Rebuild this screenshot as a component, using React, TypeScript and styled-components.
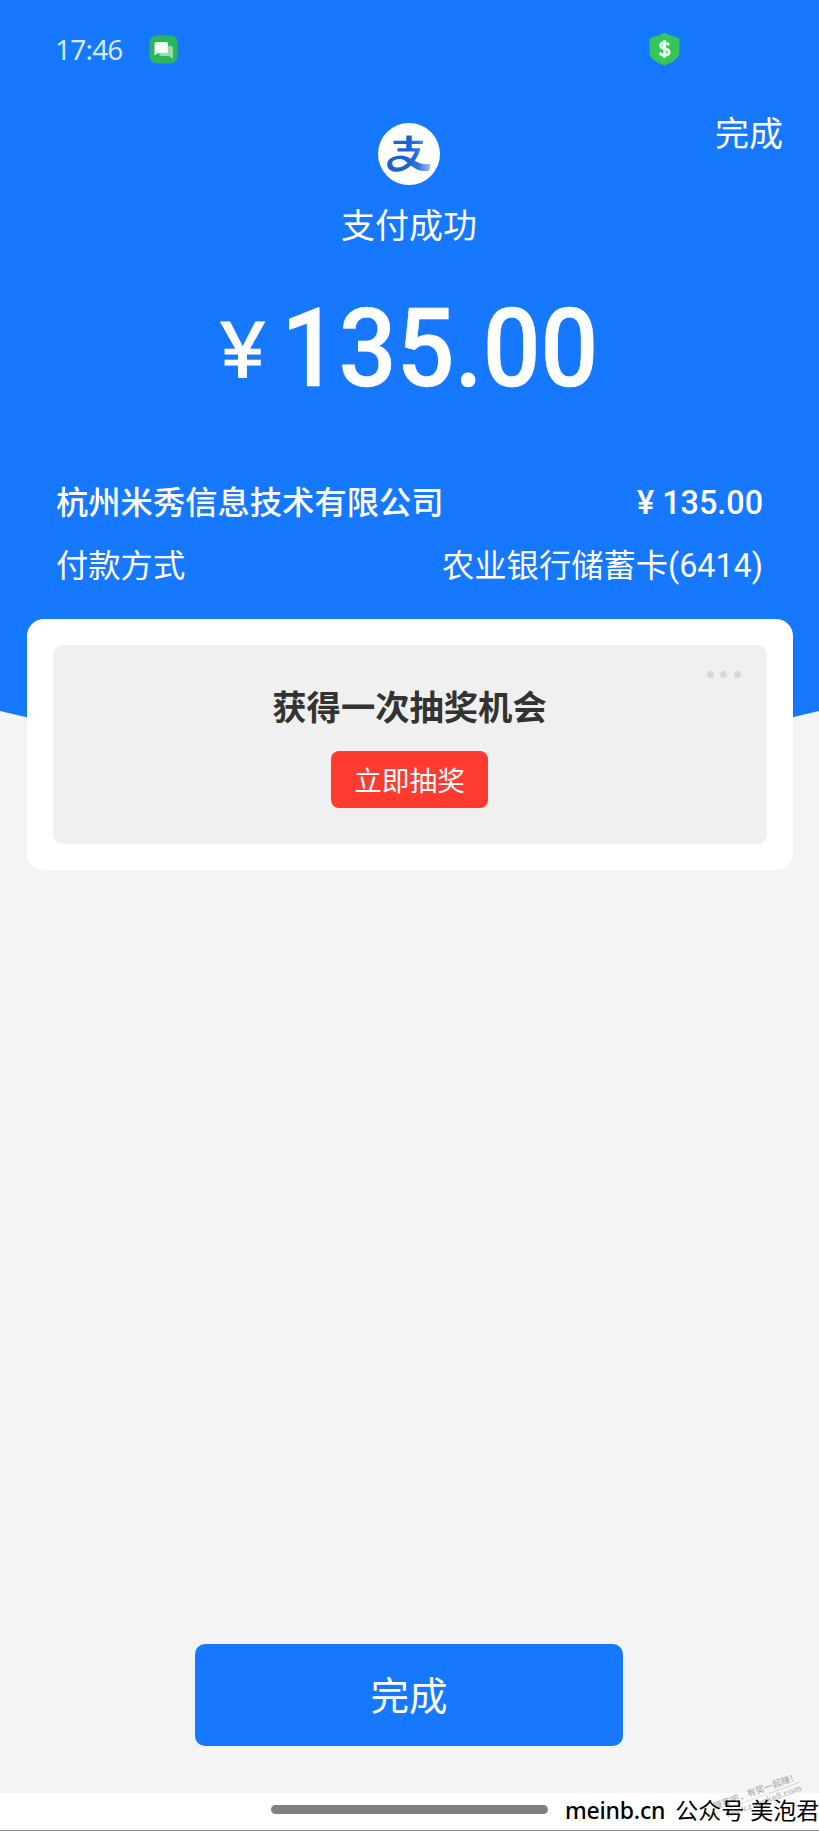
import React from "react";
import styled, { createGlobalStyle } from "styled-components";

const BLUE = "#1677ff";
const CJK = '"Noto Sans CJK SC", sans-serif';

const GlobalStyle = createGlobalStyle`
  * { box-sizing: border-box; }
  body { margin: 0; background: #f4f4f4; }
`;

const Page = styled.div`
  width: 819px;
  height: 1831px;
  display: flex;
  flex-direction: column;
  overflow: hidden;
  background: #f4f4f4;
  color: #fff;
  font-family: Roboto, ${CJK};
`;

const Hero = styled.header`
  flex: none;
  height: 761px;
  display: flex;
  flex-direction: column;
  background: ${BLUE};
  clip-path: path("M0 0H819V711Q409.5 811 0 711Z");
`;

const StatusBar = styled.div`
  height: 98px;
  padding: 0 139px 0 55px;
  display: flex;
  align-items: center;
`;

const Clock = styled.span`
  width: 94px;
  font: 400 28px/34px "Noto Sans", sans-serif;
  letter-spacing: -0.8px;
  color: #d3e9ff;
`;

const Shield = styled.svg`
  margin-left: auto;
`;

const NavBar = styled.div`
  height: 110px;
  padding-right: 1px;
  display: grid;
  grid-template-columns: 1fr 62px 1fr;
  align-items: start;
`;

const Logo = styled.svg`
  grid-column: 2;
  margin-top: 25px;
`;

const DoneLink = styled.a`
  justify-self: end;
  margin: 9px 35px 0 0;
  font: 400 34px/50px ${CJK};
`;

const Status = styled.h1`
  margin: -9px 1px 0 0;
  text-align: center;
  font: 400 34px/50px ${CJK};
`;

const Amount = styled.div`
  height: 122px;
  margin: 39px 0 0 219px;
  display: flex;
  align-items: baseline;
  font-weight: 500;
  line-height: 122px;
  white-space: nowrap;
`;

const Currency = styled.span`
  width: 62px;
  font-size: 77px;
  font-weight: 400;
  -webkit-text-stroke: 0.8px #fff;
  transform: translate(1px, -9px) scaleX(1.12);
  transform-origin: left;
`;

const Digits = styled.span`
  font-size: 110px;
  -webkit-text-stroke: 0.6px #fff;
  transform: scaleX(0.925);
  transform-origin: left;
`;

const Details = styled.dl`
  margin: 66px 56px 0;
  display: flex;
  flex-direction: column;
  gap: 15px;
`;

const DetailRow = styled.div<{ $strong?: boolean }>`
  height: 48px;
  display: flex;
  justify-content: space-between;
  align-items: baseline;
  font-size: 32.3px;
  line-height: 48px;
  font-weight: ${(p) => (p.$strong ? 500 : 400)};
`;

const Label = styled.dt`
  font-family: ${CJK};
`;

const Value = styled.dd`
  margin: 0;
`;

const Card = styled.section`
  flex: none;
  position: relative;
  width: 766px;
  height: 251px;
  margin: -142px 0 0 26.5px;
  padding: 26px;
  border-radius: 17px;
  background: #fff;
`;

const Offer = styled.div`
  position: relative;
  height: 199px;
  padding-top: 35px;
  display: flex;
  flex-direction: column;
  align-items: center;
  border-radius: 10px;
  background: #f0f0f0;
`;

const More = styled.div`
  position: absolute;
  top: 26px;
  right: 26px;
  display: flex;
  gap: 6.3px;
`;

const Dot = styled.i`
  width: 7px;
  height: 7px;
  border-radius: 50%;
  background: #d8d8d8;
`;

const OfferTitle = styled.h2`
  margin: 0;
  color: #333;
  font: 700 34.3px/50px ${CJK};
`;

const DrawButton = styled.button`
  width: 157px;
  height: 57px;
  margin-top: 21px;
  padding: 0 0 1px;
  border: 0;
  border-radius: 8px;
  background: #ff3b30;
  color: #fff;
  font: 400 27.7px/40px ${CJK};
`;

const DoneButton = styled.button`
  flex: none;
  width: 428px;
  height: 102px;
  margin: auto 0 47px 195px;
  padding: 0 0 5px;
  border: 0;
  border-radius: 10px;
  background: ${BLUE};
  color: #fff;
  font: 400 38.5px/56px ${CJK};
`;

const Footer = styled.footer`
  flex: none;
  position: relative;
  height: 38px;
  padding: 0 0 4px 271px;
  display: flex;
  align-items: center;
  border-bottom: 1px solid #909090;
  background: #fff;
`;

const HomeBar = styled.div`
  flex: none;
  width: 277px;
  height: 9px;
  margin-top: -1px;
  border-radius: 5px;
  background: #808080;
`;

const Credit = styled.div`
  position: relative;
  margin-left: 17px;
  display: flex;
  gap: 10px;
  color: #000;
  font: 400 23px/34px "Noto Sans", ${CJK};
  white-space: nowrap;
`;

const Domain = styled.span`
  font-weight: 500;
  letter-spacing: -0.2px;
`;

const Stamp = styled.div`
  position: absolute;
  right: 16px;
  bottom: 21px;
  transform: rotate(-20deg);
  color: rgba(110, 110, 110, 0.45);
  font: 700 9px/11px "Liberation Sans", ${CJK};
  white-space: nowrap;
`;

const StampLine = styled.div<{ $indent?: boolean }>`
  padding-left: ${(p) => (p.$indent ? 9 : 0)}px;
  border-top: ${(p) => (p.$indent ? "1px solid rgba(110,110,110,.25)" : "0")};
`;

const MessageIcon = () => (
  <svg width="29" height="29" viewBox="0 0 29 29">
    <rect x=".5" y=".5" width="28" height="28" rx="7" fill="#2db55d" />
    <path d="M12 11h10a2 2 0 0 1 2 2v11l-4-3h-8a2 2 0 0 1-2-2v-6Z" fill="#93dca9" />
    <path d="M7.500 7H17a2 2 0 0 1 2 2v7a2 2 0 0 1-2 2H9l-3.500 2.500V9a2 2 0 0 1 2-2Z" fill="#f0fff2" />
  </svg>
);

const ShieldIcon = () => (
  <Shield width="31" height="34" viewBox="0 0 31 34">
    <path d="M15.500.5c4 2.800 8 3.800 12.500 5 1.500.4 2.500 1.300 2.500 2.800v12c0 6-6.500 10.200-15 13.200-8.500-3-15-7.200-15-13.200v-12c0-1.500 1-2.400 2.500-2.800 4.500-1.200 8.500-2.200 12.500-5Z" fill="#34c659" />
    <path d="M20 13c-1-1.300-2.500-2-4.500-2-2.400 0-4 1-4 2.600 0 4.200 8.600 2.200 8.600 6.400 0 2-1.800 3-4.500 3-2.100 0-3.900-.7-4.900-2.200M15.500 8.200v17.600" fill="none" stroke="#efffef" strokeWidth="3" />
  </Shield>
);

const AlipayLogo = () => (
  <Logo width="62" height="62" viewBox="0 0 62 62">
    <defs>
      <linearGradient id="tail" x1="0" x2="1">
        <stop offset="0" stopColor="#2560c8" />
        <stop offset=".5" stopColor="#1d62d6" />
        <stop offset=".72" stopColor="#2e74e6" />
        <stop offset="1" stopColor="#9cc0fa" />
      </linearGradient>
    </defs>
    <circle cx="31" cy="31" r="31" fill="#fff" />
    <path d="M23 32.500c7 0 14 6.500 21 8.300 3 .7 6 .5 8.500 0l-1.300 7c-7 1-12-.4-17-4.300-5-3.900-8-7.500-12.500-7.500-4 0-7.500 1.700-7.500 4.500 0 2.500 2 4 5.200 4 7.500 0 13.500-7 17.600-16H19.500v-3.200h8.800V21H15.500v-3.200h12.800V12.500h5.500v5.300H45V21H33.800v4.300h8.700C39 38 30.500 48.800 18.500 48.800c-6 0-9.300-3-9.300-7.300 0-5.500 6-9 13.800-9Z" fill="url(#tail)" />
  </Logo>
);

export default function App() {
  return (
    <Page>
      <GlobalStyle />
      <Hero>
        <StatusBar>
          <Clock>17:46</Clock>
          <MessageIcon />
          <ShieldIcon />
        </StatusBar>
        <NavBar>
          <AlipayLogo />
          <DoneLink>完成</DoneLink>
        </NavBar>
        <Status>支付成功</Status>
        <Amount>
          <Currency>¥</Currency>
          <Digits>135.00</Digits>
        </Amount>
        <Details>
          <DetailRow $strong>
            <Label>杭州米秀信息技术有限公司</Label>
            <Value>¥ 135.00</Value>
          </DetailRow>
          <DetailRow>
            <Label>付款方式</Label>
            <Value>农业银行储蓄卡(6414)</Value>
          </DetailRow>
        </Details>
      </Hero>
      <Card>
        <Offer>
          <More>
            <Dot />
            <Dot />
            <Dot />
          </More>
          <OfferTitle>获得一次抽奖机会</OfferTitle>
          <DrawButton>立即抽奖</DrawButton>
        </Offer>
      </Card>
      <DoneButton>完成</DoneButton>
      <Footer>
        <HomeBar />
        <Stamp>
          <StampLine>赚客吧，有奖一起赚！</StampLine>
          <StampLine $indent>www.zuanke8.com</StampLine>
        </Stamp>
        <Credit>
          <Domain>meinb.cn</Domain>
          <span>公众号 美泡君</span>
        </Credit>
      </Footer>
    </Page>
  );
}
